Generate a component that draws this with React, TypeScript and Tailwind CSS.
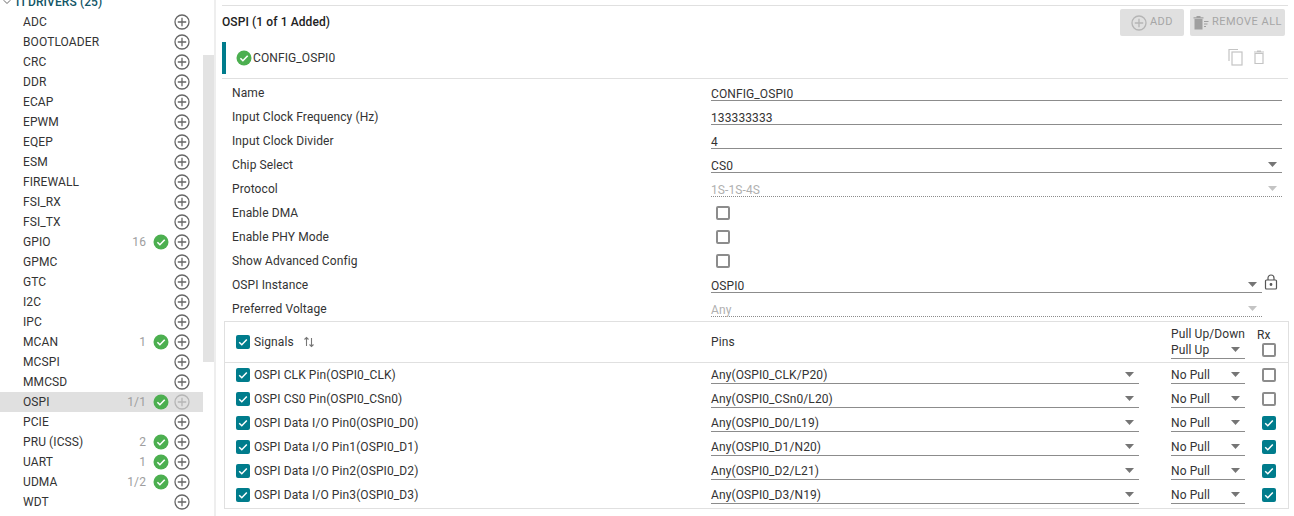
import { ChevronDown } from 'lucide-react';

const drivers = [
  { name: 'ADC' },
  { name: 'BOOTLOADER' },
  { name: 'CRC' },
  { name: 'DDR' },
  { name: 'ECAP' },
  { name: 'EPWM' },
  { name: 'EQEP' },
  { name: 'ESM' },
  { name: 'FIREWALL' },
  { name: 'FSI_RX' },
  { name: 'FSI_TX' },
  { name: 'GPIO', count: '16', ok: true },
  { name: 'GPMC' },
  { name: 'GTC' },
  { name: 'I2C' },
  { name: 'IPC' },
  { name: 'MCAN', count: '1', ok: true },
  { name: 'MCSPI' },
  { name: 'MMCSD' },
  { name: 'OSPI', count: '1/1', ok: true, active: true },
  { name: 'PCIE' },
  { name: 'PRU (ICSS)', count: '2', ok: true },
  { name: 'UART', count: '1', ok: true },
  { name: 'UDMA', count: '1/2', ok: true },
  { name: 'WDT' },
];

const signals = [
  { label: 'OSPI CLK Pin(OSPI0_CLK)', pin: 'Any(OSPI0_CLK/P20)', rx: false },
  { label: 'OSPI CS0 Pin(OSPI0_CSn0)', pin: 'Any(OSPI0_CSn0/L20)', rx: false },
  { label: 'OSPI Data I/O Pin0(OSPI0_D0)', pin: 'Any(OSPI0_D0/L19)', rx: true },
  { label: 'OSPI Data I/O Pin1(OSPI0_D1)', pin: 'Any(OSPI0_D1/N20)', rx: true },
  { label: 'OSPI Data I/O Pin2(OSPI0_D2)', pin: 'Any(OSPI0_D2/L21)', rx: true },
  { label: 'OSPI Data I/O Pin3(OSPI0_D3)', pin: 'Any(OSPI0_D3/N19)', rx: true },
];

const PlusCircle = ({ dim = false, size = 16 }: { dim?: boolean; size?: number }) => (
  <svg width={size} height={size} viewBox="0 0 16 16" fill="none" stroke={dim ? '#b5b5b5' : '#666666'} strokeWidth="1.3" className="shrink-0">
    <circle cx="8" cy="8" r="7" />
    <path d="M8 3.8v8.4M3.8 8h8.4" />
  </svg>
);

const OkBadge = () => (
  <svg width="16" height="16" viewBox="0 0 16 16" className="shrink-0">
    <circle cx="8" cy="8" r="7.5" fill="#4caf50" />
    <path d="M4.4 8.2l2.5 2.5 4.8-4.9" fill="none" stroke="#ffffff" strokeWidth="1.6" />
  </svg>
);

const Check = ({ on }: { on: boolean }) =>
  on ? (
    <span className="flex h-[14px] w-[14px] shrink-0 items-center justify-center rounded-[2px] bg-[#007c8c]">
      <svg width="12" height="12" viewBox="0 0 12 12">
        <path d="M2.2 6.2l2.6 2.5 5-5.2" fill="none" stroke="#ffffff" strokeWidth="1.5" />
      </svg>
    </span>
  ) : (
    <span className="block h-[14px] w-[14px] shrink-0 rounded-[2px] border-2 border-[#8c8c8c]" />
  );

const Arrow = ({ dim = false }: { dim?: boolean }) => (
  <svg width="9" height="5" viewBox="0 0 9 5" className="shrink-0">
    <path d="M0 0h9L4.5 5z" fill={dim ? '#c4c4c4' : '#757575'} />
  </svg>
);

const Select = ({ value, className }: { value: string; className: string }) => (
  <div className={`flex h-[17px] items-center justify-between border-b border-[#8c8c8c] pr-[5px] ${className}`}>
    <span>{value}</span>
    <Arrow />
  </div>
);

const FormRow = ({ label, children }: { label: string; children: React.ReactNode }) => (
  <div className="flex h-[24px] items-center">
    <span className="w-[489px] shrink-0 pl-[10px]">{label}</span>
    <div className="flex-1">{children}</div>
  </div>
);

const Field = ({ value, select = false, dim = false, width = 'w-[571px]' }: { value: string; select?: boolean; dim?: boolean; width?: string }) => (
  <div
    className={`flex h-[17px] -translate-y-[1px] items-end justify-between pr-[5px] leading-[12px] ${width} ${
      dim ? 'border-b border-dotted border-[#8c8c8c] text-[#b0b0b0]' : 'border-b border-[#8c8c8c]'
    }`}
  >
    <span>{value}</span>
    {select && <span className="mb-[5px] flex"><Arrow dim={dim} /></span>}
  </div>
);

export default function App() {
  return (
    <div className="flex h-[516px] w-[1294px] overflow-hidden bg-white font-['Roboto',sans-serif] text-[12px] tracking-[0.1px] text-[#333333]">
      {/* Driver list */}
      <aside className="flex w-[216px] shrink-0 border-r-2 border-[#eeeeee]">
        <div className="mt-[-8px] w-[203px] shrink-0">
          <div className="flex h-[20px] items-center gap-[1px] pl-[1px] font-medium text-[#115566]">
            <ChevronDown size={12} className="text-[#666666]" />
            <span>TI DRIVERS (25)</span>
          </div>
          {drivers.map((d) => (
            <div key={d.name} className={`flex h-[20px] items-center pl-[23px] pr-[13px] ${d.active ? 'bg-[#e0e0e0]' : ''}`}>
              <span className="flex-1">{d.name}</span>
              {d.count && <span className="mr-[7px] text-[#9e9e9e]">{d.count}</span>}
              {d.ok && <span className="mr-[5px]"><OkBadge /></span>}
              <PlusCircle dim={d.active} />
            </div>
          ))}
        </div>
        <div className="mt-[55px] h-[307px] w-[11px] bg-[#e3e3e3]" />
      </aside>

      {/* OSPI module */}
      <main className="flex min-w-0 flex-1 flex-col pl-[6px] pr-[6px]">
        <div className="mt-[5px] flex h-[32px] items-start justify-between border-t border-[#e0e0e0] pr-[3px]">
          <span className="flex h-[31px] items-center font-medium text-[#222222]">OSPI (1 of 1 Added)</span>
          <div className="mt-[3px] flex gap-[6px] text-[11px] tracking-[0.5px] text-[#a6a6a6]">
            <div className="flex h-[27px] w-[64px] items-center justify-center gap-[3px] rounded-[2px] bg-[#e0e0e0]">
              <PlusCircle dim />
              <span>ADD</span>
            </div>
            <div className="flex h-[27px] w-[95px] items-center justify-center gap-[3px] rounded-[2px] bg-[#e0e0e0]">
              <svg width="16" height="14" viewBox="0 0 16 14">
                <path d="M1.5 3h8v10.5h-8zM.5 1.2h10v1.2H.5zM3.5 0h4v1.2h-4z" fill="#a0a0a0" />
                <path d="M11 5.5h4.5M11 8h3.5M11 10.5h2" stroke="#a0a0a0" strokeWidth="1" />
              </svg>
              <span>REMOVE ALL</span>
            </div>
          </div>
        </div>

        <div className="mt-[5px] flex h-[37px] items-start justify-between border-b border-[#e0e0e0]">
          <div className="flex h-[32px] items-center gap-[1px] border-l-4 border-[#007c8c] pl-[10px]">
            <OkBadge />
            <span>CONFIG_OSPI0</span>
          </div>
          <div className="mr-[23px] mt-[6px] flex items-center gap-[9px]">
            <svg width="16" height="18" viewBox="0 0 16 18" fill="none" stroke="#c4c4c4" strokeWidth="1.2">
              <path d="M1 13V1.5h9" />
              <rect x="4" y="4" width="10" height="13" />
            </svg>
            <svg width="12" height="14" viewBox="0 0 12 14" fill="none" stroke="#c4c4c4" strokeWidth="1.2">
              <path d="M2 3.5h8v10H2zM1 2h10M4 1h4" />
            </svg>
          </div>
        </div>

        <div className="mt-[2px]">
          <FormRow label="Name"><Field value="CONFIG_OSPI0" /></FormRow>
          <FormRow label="Input Clock Frequency (Hz)"><Field value="133333333" /></FormRow>
          <FormRow label="Input Clock Divider"><Field value="4" /></FormRow>
          <FormRow label="Chip Select"><Field value="CS0" select /></FormRow>
          <FormRow label="Protocol"><Field value="1S-1S-4S" select dim /></FormRow>
          <FormRow label="Enable DMA"><div className="pl-[5px]"><Check on={false} /></div></FormRow>
          <FormRow label="Enable PHY Mode"><div className="pl-[5px]"><Check on={false} /></div></FormRow>
          <FormRow label="Show Advanced Config"><div className="pl-[5px]"><Check on={false} /></div></FormRow>
          <FormRow label="OSPI Instance">
            <div className="flex items-center gap-[2px]">
              <Field value="OSPI0" select width="w-[551px]" />
              <svg width="14" height="16" viewBox="0 0 14 16" fill="none" stroke="#555555" strokeWidth="1.2" className="-translate-y-[3px]">
                <rect x="1.5" y="6" width="11" height="9" rx="1" />
                <path d="M4 6V4a3 3 0 0 1 6 0v2" />
                <circle cx="7" cy="10.5" r="0.8" fill="#555555" />
              </svg>
            </div>
          </FormRow>
          <FormRow label="Preferred Voltage"><Field value="Any" select dim width="w-[551px]" /></FormRow>
        </div>

        {/* Signals table */}
        <div className="ml-[2px] w-[1065px] border border-[#e0e0e0] pb-[1px]">
          <div className="flex h-[41px] items-center border-b border-[#e0e0e0] pl-[11px]">
            <div className="flex w-[475px] items-center gap-[4px]">
              <Check on />
              <span className="pb-[1px]">Signals</span>
              <svg width="12" height="12" viewBox="0 0 12 12" className="ml-[5px]" fill="none" stroke="#777777" strokeWidth="1.1">
                <path d="M3.5 10V1.5M1.5 3.5l2-2 2 2M8.5 2v8.5M6.5 8.5l2 2 2-2" />
              </svg>
            </div>
            <span className="w-[460px] pb-[1px]">Pins</span>
            <div className="w-[86px]">
              <div className="h-[16px] leading-[16px]">Pull Up/Down</div>
              <Select value="Pull Up" className="w-[74px]" />
            </div>
            <div className="flex flex-col items-start">
              <div className="h-[16px] leading-[16px]">Rx</div>
              <div className="ml-[5px]"><Check on={false} /></div>
            </div>
          </div>
          <div>
            {signals.map((s) => (
              <div key={s.label} className="flex h-[24px] items-center pl-[11px]">
                <div className="flex w-[475px] items-center gap-[4px]">
                  <Check on />
                  <span>{s.label}</span>
                </div>
                <div className="w-[460px]">
                  <Select value={s.pin} className="w-[428px]" />
                </div>
                <div className="w-[91px]">
                  <Select value="No Pull" className="w-[74px]" />
                </div>
                <Check on={s.rx} />
              </div>
            ))}
          </div>
        </div>
      </main>
    </div>
  );
}
